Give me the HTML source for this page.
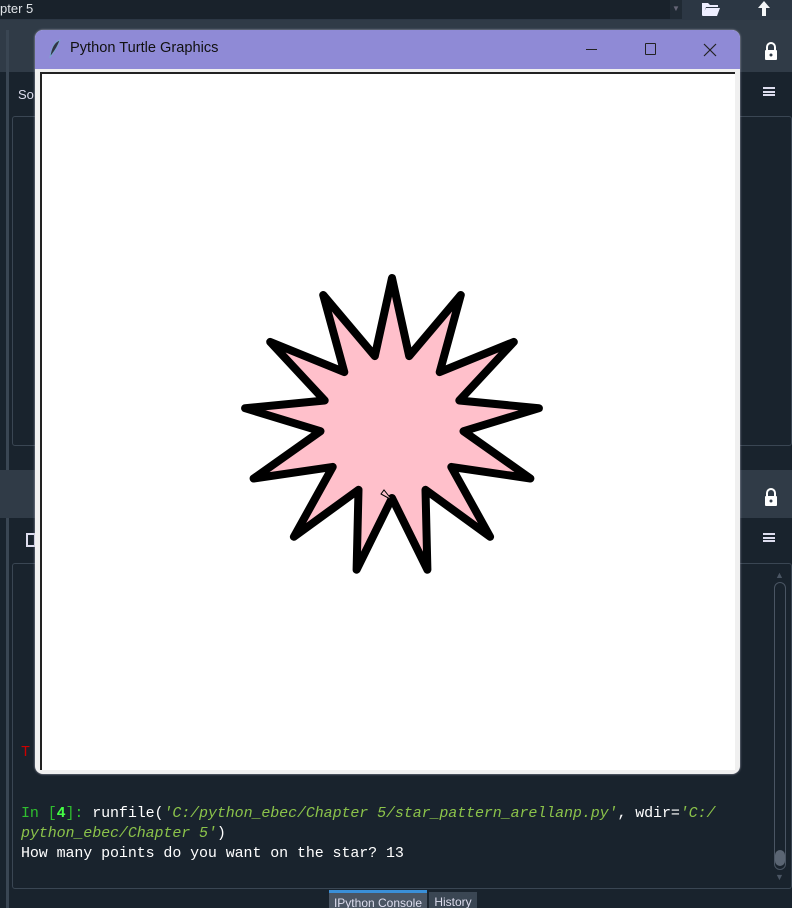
<!DOCTYPE html>
<html><head><meta charset="utf-8"><style>
*{margin:0;padding:0;box-sizing:border-box}
html,body{width:792px;height:908px;overflow:hidden}
body{background:#19232d;position:relative;font-family:"Liberation Sans",sans-serif}
.abs{position:absolute}
.mono{font-family:"Liberation Mono","DejaVu Sans Mono",monospace;font-size:15px;letter-spacing:-0.1px}
</style></head><body>
<div class="abs" style="left:0;top:0;width:792px;height:20px;background:#2c3744"></div>
<div class="abs" style="left:0;top:0;width:682px;height:19px;background:#19222b;color:#e0e4e8;font-size:13px;line-height:17px">pter 5</div>
<div class="abs" style="left:670px;top:0;width:12px;height:19px;background:#202a34;color:#667;font-size:8px;text-align:center;line-height:17px">▼</div>
<svg class="abs" style="left:700px;top:0" width="22" height="18"><path d="M2 3h6l2 2h8v2H6L3 15H2z M6 8h14l-3 8H2z" fill="#eef"/></svg>
<svg class="abs" style="left:756px;top:0" width="16" height="18"><path d="M8 1L2 8h4v8h4V8h4z" fill="#f4f6f8"/></svg>
<div class="abs" style="left:0;top:20px;width:792px;height:52px;background:#303b47"></div>
<div class="abs" style="left:0;top:72px;width:792px;height:46px;background:#19232d"></div>
<div class="abs" style="left:18px;top:87px;color:#dde;font-size:13px">So</div>
<div class="abs" style="left:6px;top:30px;width:3px;height:878px;background:#3a4653"></div>
<div class="abs" style="left:12px;top:116px;width:780px;height:330px;border:1px solid #3a4653;border-radius:3px"></div>
<div class="abs" style="left:0;top:470px;width:792px;height:48px;background:#303b47"></div>
<div class="abs" style="left:26px;top:533px;width:10px;height:14px;border:2px solid #dde"></div>
<div class="abs" style="left:12px;top:563px;width:780px;height:326px;border:1px solid #3a4653;border-radius:3px"></div>
<svg class="abs" style="left:763px;top:41px" width="16" height="20"><path d="M4 10V6a4 4 0 0 1 8 0v4" stroke="#fff" stroke-width="2" fill="none"/><rect x="2" y="9" width="12" height="10" rx="1" fill="#fff"/><circle cx="8" cy="14" r="1.5" fill="#303b47"/></svg>
<svg class="abs" style="left:763px;top:487px" width="16" height="20"><path d="M4 10V6a4 4 0 0 1 8 0v4" stroke="#fff" stroke-width="2" fill="none"/><rect x="2" y="9" width="12" height="10" rx="1" fill="#fff"/><circle cx="8" cy="14" r="1.5" fill="#303b47"/></svg>
<div class="abs" style="left:763px;top:87px;width:12px;height:9px;border-top:2px solid #dde;border-bottom:2px solid #dde"><div style="margin-top:1.5px;height:2px;background:#dde"></div></div>
<div class="abs" style="left:763px;top:533px;width:12px;height:9px;border-top:2px solid #dde;border-bottom:2px solid #dde"><div style="margin-top:1.5px;height:2px;background:#dde"></div></div>
<div class="abs" style="left:775px;top:570px;color:#4a5563;font-size:9px">▲</div>
<div class="abs" style="left:774px;top:582px;width:12px;height:288px;border:1px solid #4a5563;border-radius:6px"></div>
<div class="abs" style="left:775px;top:850px;width:10px;height:16px;background:#5a6573;border-radius:5px"></div>
<div class="abs" style="left:775px;top:872px;color:#4a5563;font-size:9px">▼</div>
<div class="abs mono" style="left:21px;top:744px;color:#c00">T</div>
<div class="abs mono" style="left:21px;top:804px;line-height:20px;color:#fff;white-space:pre"><span style="color:#2fbf2f">In [</span><span style="color:#4f4;font-weight:bold">4</span><span style="color:#2fbf2f">]:</span> runfile(<i style="color:#8bc34a">'C:/python_ebec/Chapter 5/star_pattern_arellanp.py'</i>, wdir=<i style="color:#8bc34a">'C:/</i>
<i style="color:#8bc34a">python_ebec/Chapter 5'</i>)
How many points do you want on the star? 13</div>
<div class="abs" style="left:329px;top:890px;width:98px;height:18px;background:#4a5563;border-top:3px solid #3a8fd8;color:#dde;font-size:12px;text-align:center;line-height:20px">IPython Console</div>
<div class="abs" style="left:429px;top:892px;width:48px;height:16px;background:#3a4653;color:#dde;font-size:12px;text-align:center;line-height:20px">History</div>
<div class="abs" style="left:35px;top:30px;width:705px;height:744px;background:#f0f0f0;border-radius:8px;box-shadow:0 0 2px #aab;overflow:hidden">
 <div style="height:39px;background:#8f8ad6;position:relative">
  <svg class="abs" style="left:13px;top:9px" width="14" height="20"><path d="M12 1C6 3 3 10 2 18 5 14 9 10 12 1z" fill="#334" stroke="#7ac" stroke-width="0.8"/></svg>
  <div class="abs" style="left:35px;top:10px;color:#111;font-size:14.6px">Python Turtle Graphics</div>
  <div class="abs" style="left:551px;top:19px;width:11px;height:1px;background:#222"></div>
  <div class="abs" style="left:610px;top:13px;width:11px;height:12px;border:1px solid #222;border-radius:1px"></div>
  <svg class="abs" style="left:668px;top:13px" width="14" height="14"><path d="M1 1L13 13M13 1L1 13" stroke="#222" stroke-width="1.2"/></svg>
 </div>
 <div class="abs" style="left:5px;top:42px;width:695px;height:698px;background:#fff;border-left:2px solid #222;border-top:2px solid #222"></div>
</div>
<svg class="abs" style="left:0;top:0" width="792" height="908">
<polygon points="392,278 409.2,356.1 460.8,295 439.7,372.1 513.8,341.9 459.3,400.5 538.9,408.2 463.5,431.2 530.4,478.5 451.3,466.9 490.1,536.8 425.5,489.8 427.4,569.7 392,498 356.6,569.7 358.5,489.8 293.9,536.8 332.7,466.9 253.6,478.5 320.5,431.2 245.1,408.2 324.7,400.5 270.2,341.9 344.3,372.1 323.2,295 374.8,356.1" fill="#ffc0cb" stroke="#000" stroke-width="8" stroke-linejoin="round"/>
<path d="M392 500L381 494L384 490z" fill="#ffc0cb" stroke="#000" stroke-width="1"/>
</svg>
</body></html>
